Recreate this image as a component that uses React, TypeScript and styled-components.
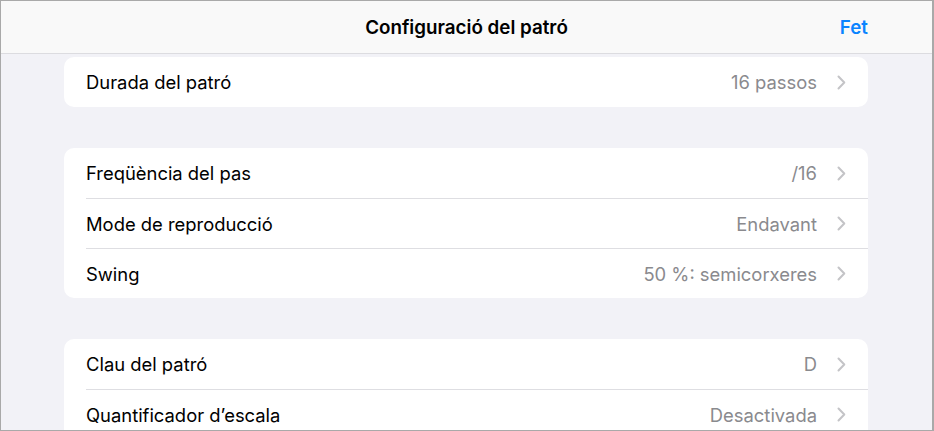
import styled, { createGlobalStyle } from 'styled-components'

const GlobalStyle = createGlobalStyle`
  html, body {
    margin: 0;
    padding: 0;
    background: #ffffff;
  }
  * {
    box-sizing: border-box;
  }
`;

interface SettingRow {
  label: string;
  value: string;
}

const sections: SettingRow[][] = [
  [{ label: 'Durada del patró', value: '16 passos' }],
  [
    { label: 'Freqüència del pas', value: '/16' },
    { label: 'Mode de reproducció', value: 'Endavant' },
    { label: 'Swing', value: '50 %: semicorxeres' },
  ],
  [
    { label: 'Clau del patró', value: 'D' },
    { label: 'Quantificador d’escala', value: 'Desactivada' },
  ],
];

const Chevron = () => (
  <ChevronSvg width="9" height="15" viewBox="0 0 9 15" aria-hidden="true">
    <path d="M1.5 1.5 L7.3 7.5 L1.5 13.5" fill="none" stroke="#c4c4c7" strokeWidth="2" strokeLinecap="round" strokeLinejoin="round" />
  </ChevronSvg>
);

const App: React.FC = () => {
  return (
    <>
      <GlobalStyle />
      <Frame>
        <Header>
          <HeaderTitle>Configuració del patró</HeaderTitle>
          <DoneButton>Fet</DoneButton>
        </Header>
        <Content>
          {sections.map((rows, i) => (
            <Card key={i}>
              {rows.map((row) => (
                <Row key={row.label}>
                  <RowLabel>{row.label}</RowLabel>
                  <RowValue>{row.value}</RowValue>
                  <Chevron />
                </Row>
              ))}
            </Card>
          ))}
        </Content>
      </Frame>
    </>
  );
};

const Frame = styled.div`
  width: 934px;
  height: 431px;
  overflow: hidden;
  border: 1px solid #a9a9a9;
  border-right-width: 2px;
  background: #f2f2f7;
  font-family: Inter, "Noto Sans", sans-serif;
  display: flex;
  flex-direction: column;
`;

const Header = styled.div`
  height: 53px;
  flex-shrink: 0;
  background: #f9f9f9;
  border-bottom: 1px solid #dcdce0;
  display: flex;
  align-items: center;
  justify-content: center;
  position: relative;
`;

const HeaderTitle = styled.h1`
  margin: 0;
  font-size: 18.8px;
  font-weight: 600;
  color: #000000;
  letter-spacing: 0;
`;

const DoneButton = styled.button`
  position: absolute;
  right: 64px;
  top: 50%;
  transform: translateY(-50%);
  border: none;
  background: none;
  padding: 0;
  font-family: inherit;
  font-size: 18.8px;
  font-weight: 600;
  color: #0a84ff;
`;

const Content = styled.div`
  display: flex;
  flex-direction: column;
  gap: 41px;
  padding: 3px 64px 0 63px;
`;

const Card = styled.div`
  background: #ffffff;
  border-radius: 10px;
  padding-left: 22px;
  display: flex;
  flex-direction: column;
  flex-shrink: 0;
`;

const Row = styled.div`
  height: 50px;
  display: flex;
  align-items: center;
  padding-right: 22px;
  & + & {
    border-top: 1px solid #dedee2;
  }
`;

const RowLabel = styled.span`
  flex: 1;
  font-size: 18.4px;
  color: #000000;
`;

const RowValue = styled.span`
  font-size: 18.4px;
  color: #8a8a8e;
  margin-right: 20px;
`;

const ChevronSvg = styled.svg`
  flex-shrink: 0;
`;

export default App;
